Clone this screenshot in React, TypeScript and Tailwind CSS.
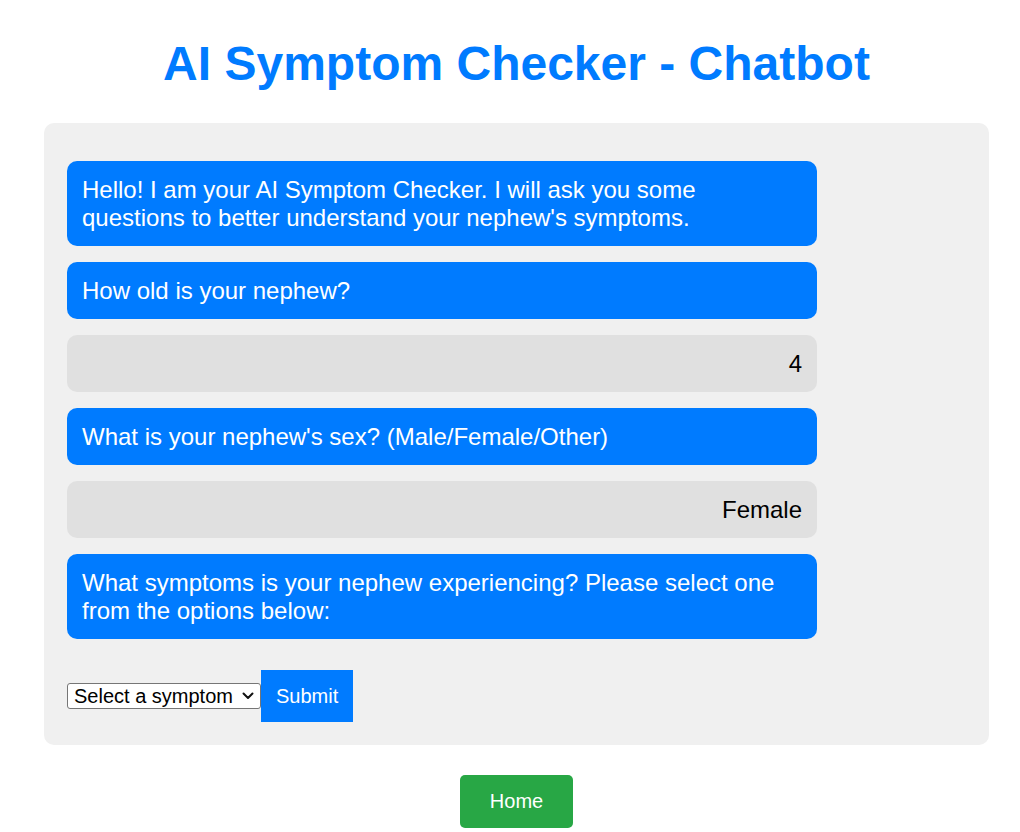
import { useState } from "react";

type Message = {
    id: number;
    from: "bot" | "user";
    text: string;
};

const messages: Message[] = [
    {
        id: 1,
        from: "bot",
        text: "Hello! I am your AI Symptom Checker. I will ask you some questions to better understand your nephew's symptoms.",
    },
    { id: 2, from: "bot", text: "How old is your nephew?" },
    { id: 3, from: "user", text: "4" },
    { id: 4, from: "bot", text: "What is your nephew's sex? (Male/Female/Other)" },
    { id: 5, from: "user", text: "Female" },
    {
        id: 6,
        from: "bot",
        text: "What symptoms is your nephew experiencing? Please select one from the options below:",
    },
];

export default function App() {
    const [symptom, setSymptom] = useState("");

    return (
        <div className="min-h-screen bg-white font-['Liberation_Sans',Arial,sans-serif]">
            <div className="ml-[44px] w-[945px] pb-[4px]">
                <h1 className="text-center text-[48px] leading-[normal] font-bold text-[#007bff] mt-[36px] mb-[32px]">
                    AI Symptom Checker - Chatbot
                </h1>

                <div className="bg-[#f0f0f0] rounded-[10px] pl-[23px] pr-[23px] pt-[38px] pb-[23px]">
                    <div className="flex flex-col gap-[16px] w-[750px]">
                        {messages.map((msg) => (
                            <div
                                key={msg.id}
                                className={
                                    msg.from === "bot"
                                        ? "bg-[#007bff] text-white rounded-[10px] px-[15px] py-[14.5px] text-[24px] leading-[28px]"
                                        : "bg-[#e0e0e0] text-black text-right rounded-[10px] px-[15px] py-[14.5px] text-[24px] leading-[28px]"
                                }
                            >
                                {msg.text}
                            </div>
                        ))}
                    </div>

                    <div className="flex items-center mt-[31px]">
                        <div className="relative">
                            <select
                                value={symptom}
                                onChange={(e) => setSymptom(e.target.value)}
                                className="appearance-none block w-[194px] h-[26px] pl-[6px] text-[20px] leading-[normal] text-black bg-white border border-[#767676] rounded-[3px]"
                            >
                                <option value="">Select a symptom</option>
                                <option value="fever">Fever</option>
                                <option value="cough">Cough</option>
                                <option value="rash">Rash</option>
                                <option value="vomiting">Vomiting</option>
                            </select>
                            <svg
                                className="pointer-events-none absolute right-[7px] top-[9px]"
                                width="12"
                                height="8"
                                viewBox="0 0 12 8"
                                fill="none"
                                stroke="#111"
                                strokeWidth="2"
                            >
                                <path d="M1.5 1.5l4.5 4.5 4.5-4.5" strokeLinecap="round" strokeLinejoin="round" />
                            </svg>
                        </div>
                        <button
                            type="button"
                            className="bg-[#007bff] text-white text-[20px] leading-[22px] px-[15px] py-[15px]"
                        >
                            Submit
                        </button>
                    </div>
                </div>

                <div className="flex justify-center mt-[30px]">
                    <button
                        type="button"
                        className="bg-[#28a745] text-white text-[20px] leading-[23px] px-[30px] py-[15px] rounded-[5px]"
                    >
                        Home
                    </button>
                </div>
            </div>
        </div>
    );
}
